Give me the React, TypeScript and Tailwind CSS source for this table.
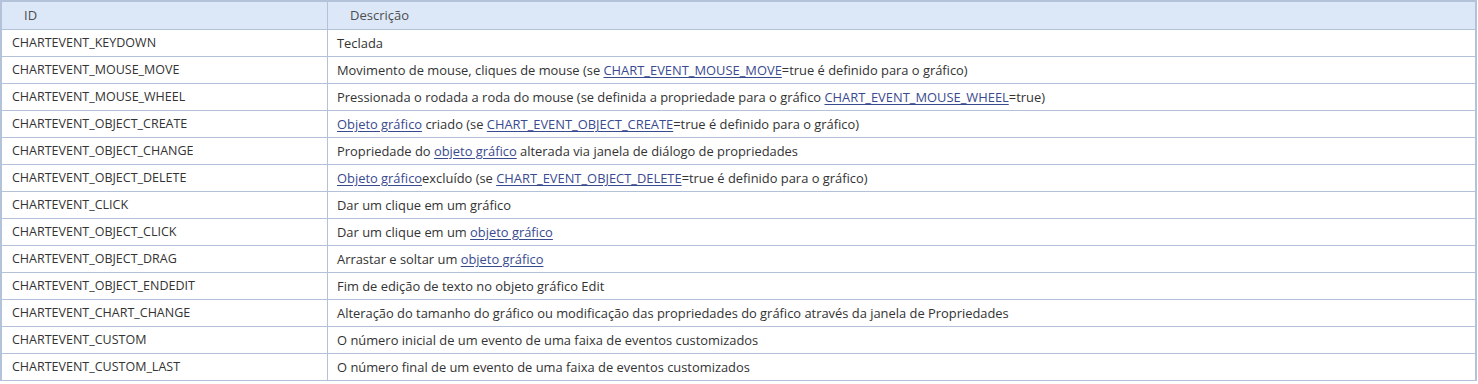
const rows: { id: string; desc: React.ReactNode }[] = [];

function L({ children }: { children: React.ReactNode }) {
    return <a className="text-[#3a4a8f] underline underline-offset-2">{children}</a>;
}

rows.push(
    { id: 'CHARTEVENT_KEYDOWN', desc: 'Teclada' },
    {
        id: 'CHARTEVENT_MOUSE_MOVE',
        desc: (
            <>
                Movimento de mouse, cliques de mouse (se <L>CHART_EVENT_MOUSE_MOVE</L>=true é definido para o gráfico)
            </>
        ),
    },
    {
        id: 'CHARTEVENT_MOUSE_WHEEL',
        desc: (
            <>
                Pressionada o rodada a roda do mouse (se definida a propriedade para o gráfico <L>CHART_EVENT_MOUSE_WHEEL</L>=true)
            </>
        ),
    },
    {
        id: 'CHARTEVENT_OBJECT_CREATE',
        desc: (
            <>
                <L>Objeto gráfico</L> criado (se <L>CHART_EVENT_OBJECT_CREATE</L>=true é definido para o gráfico)
            </>
        ),
    },
    {
        id: 'CHARTEVENT_OBJECT_CHANGE',
        desc: (
            <>
                Propriedade do <L>objeto gráfico</L> alterada via janela de diálogo de propriedades
            </>
        ),
    },
    {
        id: 'CHARTEVENT_OBJECT_DELETE',
        desc: (
            <>
                <L>Objeto gráfico</L>excluído (se <L>CHART_EVENT_OBJECT_DELETE</L>=true é definido para o gráfico)
            </>
        ),
    },
    { id: 'CHARTEVENT_CLICK', desc: 'Dar um clique em um gráfico' },
    {
        id: 'CHARTEVENT_OBJECT_CLICK',
        desc: (
            <>
                Dar um clique em um <L>objeto gráfico</L>
            </>
        ),
    },
    {
        id: 'CHARTEVENT_OBJECT_DRAG',
        desc: (
            <>
                Arrastar e soltar um <L>objeto gráfico</L>
            </>
        ),
    },
    { id: 'CHARTEVENT_OBJECT_ENDEDIT', desc: 'Fim de edição de texto no objeto gráfico Edit' },
    {
        id: 'CHARTEVENT_CHART_CHANGE',
        desc: 'Alteração do tamanho do gráfico ou modificação das propriedades do gráfico através da janela de Propriedades',
    },
    { id: 'CHARTEVENT_CUSTOM', desc: 'O número inicial de um evento de uma faixa de eventos customizados' },
    { id: 'CHARTEVENT_CUSTOM_LAST', desc: 'O número final de um evento de uma faixa de eventos customizados' }
);

export default function App() {
    return (
        <div className="bg-white h-[384px] overflow-hidden font-['Open_Sans',sans-serif]">
            <div className="w-[1477px] border-2 border-b-0 border-[#b3c2d8]">
                <div className="flex h-[28px] bg-[#dce8f8] border-b border-[#b3c2d8] text-[#4d4d4d] text-[13px]">
                    <div className="w-[326px] border-r border-[#b3c2d8] pl-[22px] flex items-center">ID</div>
                    <div className="flex-1 pl-[22px] flex items-center">Descrição</div>
                </div>
                {rows.map((r) => (
                    <div key={r.id} className="flex h-[27px] border-b border-[#b3c2d8] text-[#333]">
                        <div className="w-[326px] border-r border-[#b3c2d8] pl-[10px] pt-px flex items-center text-[12.5px]">
                            {r.id}
                        </div>
                        <div className="flex-1 pl-[9px] pt-px flex items-center whitespace-pre text-[12.9px]">{r.desc}</div>
                    </div>
                ))}
            </div>
        </div>
    );
}
